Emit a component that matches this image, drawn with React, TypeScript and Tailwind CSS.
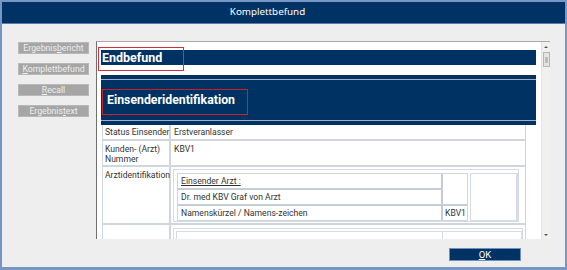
import React from "react";

const F = { fontFamily: "Roboto, 'Noto Sans', Arial, sans-serif" };

function SideBtn({ pre, u, post }: { pre: string; u: string; post: string }) {
  return (
    <div className="w-[71px] h-[12px] bg-[#a6a6a6] border border-[#b8b8b8] flex items-center justify-center text-[8.7px] leading-none text-[#eeeeee]">
      <span>
        {pre}
        <span className="underline">{u}</span>
        {post}
      </span>
    </div>
  );
}

export default function App() {
  return (
    <div
      className="w-[567px] h-[270px] bg-[#7896c4] p-[2px] pb-[3px] flex flex-col overflow-hidden"
      style={F}
    >
      <div className="h-[22px] bg-[#003265] border-b border-[#5a7aa8] flex items-center justify-center pr-[32px] text-white text-[9.8px]" style={{ fontFamily: "'Noto Sans', 'Open Sans', sans-serif" }}>
        Komplettbefund
      </div>
      <div className="flex-1 bg-[#eeeeee] relative flex flex-col">
        <div className="flex pt-[17px]">
          <div className="w-[94px] pl-[16px] pt-[1px] flex flex-col gap-[9px]">
            <SideBtn pre="Ergebnis" u="b" post="ericht" />
            <SideBtn pre="" u="K" post="omplettbefund" />
            <SideBtn pre="" u="R" post="ecall" />
            <SideBtn pre="Ergebnis" u="t" post="ext" />
          </div>
          <div className="w-[454px] h-[198px] bg-white border-t border-l border-t-[#a9a9a9] border-l-[#6f6f6f] flex relative">
            <div className="flex-1 overflow-hidden pl-[4px] pt-[8px]">
              <div className="w-[435px] h-[15px] bg-[#003263] text-white font-bold text-[12.5px] leading-[15px] pl-[1px]">
                Endbefund
              </div>
              <div className="w-[435px] mt-[10px] bg-[#003263] py-[4px]">
                <div className="h-[42px] border-y border-[#9fb0c6] flex items-center pl-[6px] text-white font-bold text-[12.3px]">
                  Einsenderidentifikation
                </div>
              </div>
              <div className="w-[424px] ml-[1px] border-l border-r border-[#cfd6e0] text-[8.6px] text-[#333333]">
                <div className="flex h-[16px] border-b-2 border-[#cfd6e0]">
                  <div className="w-[68px] border-r-2 border-[#cfd6e0] pl-[2px] flex items-center whitespace-nowrap">Status Einsender</div>
                  <div className="flex-1 pl-[3px] flex items-center">Erstveranlasser</div>
                </div>
                <div className="flex h-[26px] border-b-2 border-[#cfd6e0]">
                  <div className="w-[68px] border-r-2 border-[#cfd6e0] pl-[2px] pt-[3px] leading-[10px]">
                    Kunden- (Arzt)
                    <br />
                    Nummer
                  </div>
                  <div className="flex-1 pl-[3px] pt-[3px] leading-[10px]">KBV1</div>
                </div>
                <div className="flex h-[58px] border-b-2 border-[#cfd6e0]">
                  <div className="w-[68px] border-r-2 border-[#cfd6e0] pl-[2px] pt-[3px] leading-[10px]">Arztidentifikation</div>
                  <div className="flex-1 pl-[2px] pt-[2px]">
                    <div className="w-[346px] h-[53px] border border-[#d6dce6] flex pl-[3px] pt-[3px]">
                      <div className="w-[291px] h-[48px] border border-[#cfd6e0] flex">
                        <div className="w-[263px] flex flex-col">
                          <div className="h-[16px] border-b-2 border-[#c4ccd8] pl-[3px] flex items-center">
                            <span className="underline">Einsender Arzt :</span>
                          </div>
                          <div className="h-[16px] border-b-2 border-[#c4ccd8] pl-[3px] flex items-center">
                            Dr. med KBV Graf von Arzt
                          </div>
                          <div className="flex-1 pl-[3px] flex items-center">Namenskürzel / Namens-zeichen</div>
                        </div>
                        <div className="flex-1 border-l-2 border-[#c4ccd8] flex flex-col">
                          <div className="h-[32px] border-b-2 border-[#c4ccd8]"></div>
                          <div className="flex-1 flex items-center pl-[2px]">KBV1</div>
                        </div>
                      </div>
                      <div className="w-[48px] h-[48px] ml-[2px] border border-[#d6dce6] border-r-2"></div>
                    </div>
                  </div>
                </div>
                <div className="flex h-[20px]">
                  <div className="w-[68px] border-r-2 border-[#cfd6e0]"></div>
                  <div className="flex-1 pl-[2px] pt-[3px]">
                    <div className="w-[350px] h-[20px] border border-[#d6dce6] flex pl-[2px] pt-[2px]">
                      <div className="w-[267px] h-[20px] border border-[#d6dce6]"></div>
                      <div className="flex-1 border-t border-r border-[#d6dce6]"></div>
                    </div>
                  </div>
                </div>
              </div>
            </div>
            <div className="w-[9px] bg-[#f0f0f0] border-l border-[#e2e2e2] flex flex-col items-center">
              <div className="h-[9px] flex items-center justify-center">
                <div className="w-0 h-0 border-l-[2px] border-r-[2px] border-b-[2px] border-l-transparent border-r-transparent border-b-[#555]"></div>
              </div>
              <div className="w-[7px] h-[15px] mt-[1px] bg-[#e4e4e4] border border-[#b5b5b5] flex items-center justify-center">
                <div className="w-[3px] h-[6px] bg-[#bbbbbb]"></div>
              </div>
              <div className="flex-1"></div>
              <div className="h-[9px] flex items-center justify-center">
                <div className="w-0 h-0 border-l-[2px] border-r-[2px] border-t-[2px] border-l-transparent border-r-transparent border-t-[#555]"></div>
              </div>
            </div>
            <div className="absolute left-[1px] top-[5px] w-[86px] h-[24px] border border-[#d2303a]"></div>
            <div className="absolute left-[5px] top-[47px] w-[146px] h-[26px] border border-[#c8202a]"></div>
          </div>
        </div>
        <div className="flex justify-end pr-[44px] pt-[9px]">
          <div className="w-[72px] h-[13px] bg-[#003263] border border-[#6f8fbf] text-white text-[9.5px] leading-none flex items-center justify-center">
            <span>
              <span className="underline">O</span>K
            </span>
          </div>
        </div>
      </div>
    </div>
  );
}
